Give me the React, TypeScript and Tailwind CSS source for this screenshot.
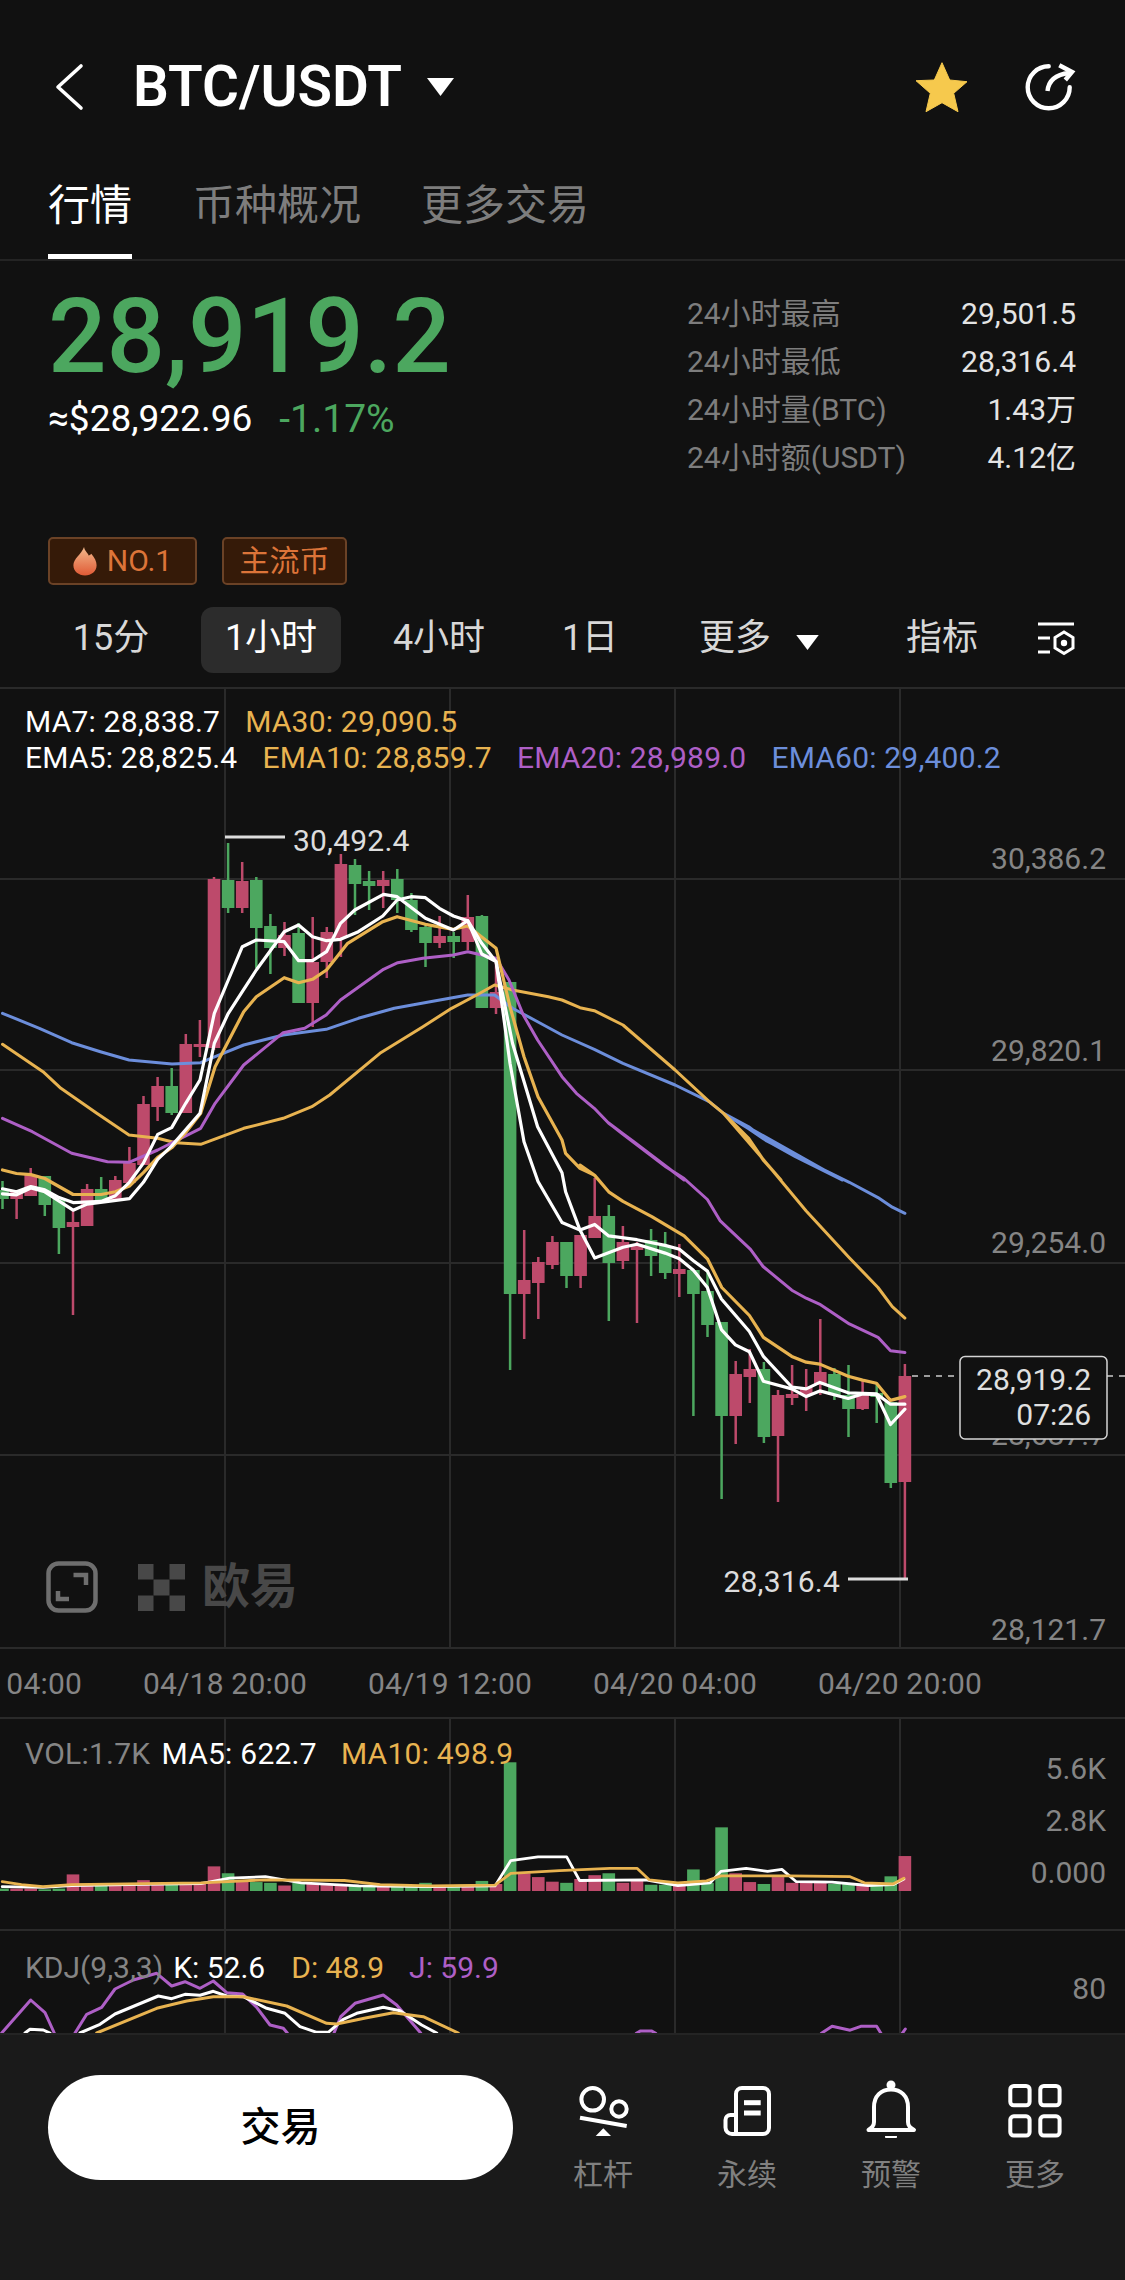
import React from "react";

type P = [number, number];
const Z2 = (p: P[]): P[] => p.map(([x, y]) => [x / 2.79, 680 + y / 3]);
const Z3 = (p: P[]): P[] => p.map(([x, y]) => [x / 2.79, 1100 + y / 2.613]);
const Z4 = (p: P[]): P[] => p.map(([x, y]) => [562 + x / 2.785, 1100 + y / 2.613]);
const Z5 = (p: P[]): P[] => p.map(([x, y]) => [562 + x / 2.785, 680 + y / 3]);
const Z6 = (p: P[]): P[] => p.map(([x, y]) => [x / 1.394, 1680 + y / 2.613]);
const Z12 = (p: P[]): P[] => p.map(([x, y]) => [x / 3, 1920 + y / 3]);
const str = (p: P[]) => p.map(([x, y]) => `${x.toFixed(1)},${y.toFixed(1)}`).join(" ");

const GREEN = "#4ca75f";
const RED = "#bd4a6b";
const ORANGE = "#e8b350";
const PURPLE = "#ae5fc6";
const BLUE = "#6c8edb";
const GRID = "#2a2a2a";

// bodyTop, bodyBottom, wickTop, wickBottom, colour
const candles: [number, number, number, number, "g" | "r"][] = [
  [1190, 1199, 1181, 1209, "g"], [1190, 1199, 1190, 1219, "r"], [1175, 1196, 1168, 1196, "r"], [1176, 1205, 1176, 1216, "g"],
  [1198, 1228, 1198, 1254, "g"], [1222, 1227, 1210, 1315, "r"], [1189, 1226, 1184, 1226, "r"], [1189, 1200, 1177, 1203, "g"],
  [1180, 1200, 1176, 1200, "r"], [1163, 1183, 1147, 1183, "r"], [1104, 1165, 1096, 1165, "r"], [1086, 1107, 1077, 1121, "r"],
  [1086, 1113, 1068, 1115, "g"], [1044, 1113, 1034, 1113, "r"], [1044, 1047, 1020, 1057, "r"], [879, 1048, 877, 1050, "r"],
  [880, 908, 843, 913, "g"], [881, 908, 862, 913, "r"], [880, 928, 877, 968, "g"], [926, 948, 914, 974, "g"],
  [935, 948, 922, 956, "r"], [933, 1003, 923, 1003, "g"], [962, 1003, 917, 1027, "r"], [932, 962, 927, 978, "r"],
  [864, 938, 854, 957, "r"], [865, 884, 859, 915, "g"], [881, 886, 871, 910, "g"], [880, 886, 871, 908, "r"],
  [879, 900, 869, 913, "g"], [900, 930, 893, 932, "g"], [927, 943, 925, 967, "g"], [936, 943, 916, 948, "r"],
  [936, 942, 932, 958, "g"], [917, 942, 895, 950, "r"], [916, 1008, 915, 1008, "g"], [992, 1008, 963, 1014, "r"],
  [982, 1294, 982, 1370, "g"], [1280, 1294, 1230, 1339, "r"], [1262, 1283, 1257, 1319, "r"], [1242, 1265, 1236, 1269, "r"],
  [1242, 1276, 1242, 1288, "g"], [1235, 1276, 1235, 1288, "r"], [1216, 1238, 1178, 1238, "r"], [1216, 1263, 1205, 1321, "g"],
  [1242, 1261, 1226, 1269, "r"], [1245, 1250, 1242, 1323, "r"], [1240, 1256, 1229, 1276, "g"], [1246, 1273, 1232, 1279, "g"],
  [1269, 1274, 1244, 1297, "r"], [1270, 1294, 1270, 1416, "g"], [1291, 1325, 1270, 1337, "g"], [1322, 1416, 1322, 1499, "g"],
  [1374, 1416, 1361, 1444, "r"], [1369, 1377, 1349, 1403, "r"], [1369, 1437, 1362, 1443, "g"], [1395, 1436, 1390, 1502, "r"],
  [1394, 1398, 1365, 1405, "r"], [1387, 1395, 1369, 1411, "r"], [1372, 1385, 1319, 1395, "r"], [1374, 1395, 1368, 1400, "g"],
  [1395, 1409, 1365, 1437, "g"], [1395, 1409, 1381, 1410, "r"], [1393, 1397, 1383, 1423, "g"], [1402, 1483, 1402, 1488, "g"],
  [1376, 1482, 1364, 1578, "r"],
];
const cx = (i: number) => 2.5 + 14.1 * i;

const blue = [
  ...Z2([[7, 1000], [110, 1045], [200, 1088], [280, 1115], [360, 1140], [480, 1152], [560, 1148], [600, 1130], [680, 1095], [790, 1065], [910, 1048], [1000, 1015], [1100, 985], [1200, 965], [1305, 945], [1380, 945], [1430, 985], [1500, 1025]]),
  ...Z5([[0, 1065], [90, 1108], [170, 1150], [315, 1215], [410, 1265], [450, 1300], [520, 1340], [570, 1382], [650, 1430], [780, 1500]]),
  ...Z4([[450, 35], [520, 75], [570, 107], [680, 160], [800, 215], [880, 255], [920, 280], [955, 296]]),
];
const ma30 = [
  ...Z2([[7, 1093], [120, 1175], [170, 1225], [270, 1300], [360, 1365], [440, 1375], [490, 1388], [560, 1393], [680, 1345], [790, 1315], [870, 1280], [920, 1245], [1060, 1120], [1180, 1040], [1260, 985], [1330, 945], [1380, 915], [1430, 930], [1530, 950]]),
  ...Z5([[0, 960], [50, 983], [90, 992], [170, 1035], [315, 1170], [410, 1265], [450, 1300], [520, 1375], [560, 1440], [610, 1500]]),
  ...Z4([[450, 35], [520, 100], [560, 155], [680, 290], [800, 412], [880, 490], [920, 540], [955, 570]]),
];
const ema20 = [
  ...Z2([[7, 1315], [90, 1355], [200, 1420], [300, 1445], [360, 1447], [440, 1410], [560, 1345], [600, 1270], [680, 1155], [790, 1058], [850, 1045], [910, 1005], [950, 960], [1070, 868], [1110, 848], [1180, 835], [1265, 825], [1305, 815], [1384, 835], [1420, 900], [1460, 1005], [1500, 1080]]),
  ...Z5([[0, 1190], [40, 1240], [90, 1285], [130, 1330], [200, 1385], [340, 1500]]),
  ...Z4([[130, 60], [170, 90], [290, 175], [340, 205], [405, 260], [440, 315], [525, 390], [560, 435], [640, 497], [680, 518], [720, 535], [800, 585], [880, 620], [915, 655], [955, 660]]),
];
const ema10 = [
  ...Z3([[7, 183], [46, 192], [86, 195], [125, 205], [204, 247], [282, 247], [322, 240], [361, 225], [400, 190], [440, 150], [479, 125], [518, 85]]),
  ...Z2([[560, 1300], [600, 1160], [680, 995], [715, 950], [793, 893], [833, 908], [872, 898], [911, 870], [970, 790], [1068, 725], [1108, 710], [1187, 733], [1265, 748], [1305, 738], [1384, 805], [1423, 980], [1462, 1130], [1501, 1250]]),
  ...Z5([[0, 1380], [10, 1420], [50, 1465], [90, 1485]]),
  ...Z4([[50, 170], [91, 197], [130, 240], [170, 265], [250, 305], [340, 355], [405, 415], [445, 490], [522, 563], [561, 620], [640, 670], [680, 685], [718, 690], [797, 722], [837, 732], [876, 740], [915, 785], [955, 775]]),
];
const white1 = [
  ...Z3([[7, 232], [46, 240], [86, 226], [125, 235], [165, 255], [204, 268], [282, 265], [322, 250], [361, 215], [400, 165], [440, 90], [479, 72]]),
  ...Z2([[518, 1270], [558, 1200], [598, 1000], [637, 900], [676, 800], [715, 780], [793, 785], [833, 842], [872, 842], [911, 815], [950, 730], [990, 690], [1070, 643], [1108, 650], [1187, 715], [1265, 750], [1305, 722], [1344, 822], [1384, 845], [1423, 1150], [1462, 1385]]),
  ...Z3([[1501, 213]]),
  ...Z4([[0, 320], [50, 340], [91, 325], [130, 355], [209, 365], [287, 380], [327, 390], [366, 420], [405, 447], [444, 520], [522, 605], [561, 670], [640, 750], [680, 755], [718, 738], [797, 765], [876, 768], [915, 795], [955, 795]]),
];
const white2 = [
  ...Z3([[7, 245], [46, 248], [86, 230], [125, 240], [204, 288], [243, 272], [361, 258], [400, 215], [440, 155], [479, 120]]),
  ...Z2([[558, 1300], [598, 1090], [637, 1000], [676, 935], [715, 870], [793, 755], [833, 735], [872, 770], [911, 782], [950, 778], [1000, 755], [1068, 708], [1108, 660], [1147, 650], [1187, 653], [1226, 685], [1265, 708], [1305, 722], [1344, 790], [1384, 845], [1430, 1090], [1500, 1340]]),
  ...Z4([[0, 190], [10, 240], [50, 340], [91, 413], [170, 385], [209, 377], [287, 400], [327, 415], [366, 445], [405, 490], [444, 600], [483, 640], [522, 658], [561, 735], [640, 755], [680, 775], [718, 760], [797, 780], [837, 768], [876, 770], [915, 848], [955, 808]]),
];

const volTops = [545, 545, 545, 547, 545, 508, 533, 535, 533, 533, 523, 530, 532, 528, 530, 487, 505, 525, 528, 530, 537, 530, 533, 535, 535, 538, 538, 538, 540, 540, 530, 537, 538, 540, 525, 533, 215, 505, 515, 527, 530, 520, 510, 505, 530, 523, 535, 535, 535, 495, 530, 385, 505, 528, 533, 515, 530, 530, 525, 533, 533, 535, 535, 513, 460];
const volWhite = Z6([[3, 540], [60, 542], [100, 537], [200, 534], [280, 532], [320, 518], [370, 514], [420, 530], [500, 538], [600, 540], [690, 538], [712, 472], [750, 462], [790, 462], [808, 524], [900, 522], [945, 537], [990, 530], [1005, 500], [1040, 492], [1070, 500], [1090, 495], [1110, 527], [1160, 528], [1210, 537], [1245, 535], [1260, 520]]);
const volOrange = Z6([[3, 527], [30, 535], [60, 540], [100, 535], [280, 530], [370, 522], [420, 523], [480, 524], [530, 535], [600, 538], [690, 536], [712, 505], [780, 498], [850, 492], [888, 492], [905, 522], [945, 530], [985, 525], [1005, 512], [1100, 512], [1185, 514], [1205, 530], [1245, 533], [1260, 518]]);

const kdjPurple: P[][] = [
  Z12([[5, 339], [92, 240], [135, 278], [163, 339]]),
  Z12([[225, 339], [260, 283], [305, 262], [345, 207], [400, 180], [470, 160], [515, 198], [555, 185], [600, 205], [640, 183], [680, 218], [728, 222], [770, 262], [810, 315], [850, 325], [862, 339]]),
  Z12([[1002, 339], [1022, 290], [1065, 250], [1150, 225], [1190, 255], [1262, 339]]),
  Z6([[887, 923], [893, 917], [908, 917], [914, 923]]),
  Z6([[1145, 923], [1160, 905], [1185, 915], [1200, 905], [1222, 905], [1228, 923]]),
  Z6([[1258, 923], [1262, 912]]),
];
const kdjWhite: P[][] = [
  Z12([[75, 339], [90, 328], [130, 330], [150, 339]]),
  Z12([[240, 339], [300, 313], [345, 282], [475, 228], [515, 236], [555, 223], [600, 226], [640, 214], [680, 228], [730, 230], [800, 265], [855, 280], [900, 320], [950, 337], [985, 337], [1030, 298], [1070, 280], [1150, 262], [1200, 272], [1265, 315], [1310, 339]]),
];
const kdjOrange = Z12([[290, 339], [470, 265], [560, 243], [640, 230], [730, 230], [860, 258], [980, 310], [1010, 312], [1100, 293], [1180, 278], [1270, 290], [1375, 339]]);

const Line = ({ p, c, w = 3 }: { p: P[]; c: string; w?: number }) => (
  <polyline points={str(p)} fill="none" stroke={c} strokeWidth={w} strokeLinejoin="round" strokeLinecap="round" />
);

const VGrid = ({ y1, y2 }: { y1: number; y2: number }) => (
  <>
    {[225, 450, 675, 900].map((x) => (
      <line key={x} x1={x} x2={x} y1={y1} y2={y2} stroke={GRID} strokeWidth={2} />
    ))}
  </>
);

const Axis = ({ y, t }: { y: number; t: string }) => (
  <text x={1106} y={y + 10.5} textAnchor="end" fill="#858585" fontSize={30}>
    {t}
  </text>
);

function MainChart() {
  return (
    <svg className="absolute inset-0 h-full w-full" viewBox="0 689 1125 958">
      <VGrid y1={689} y2={1647} />
      {[879, 1070, 1263, 1455].map((y) => (
        <line key={y} x1={0} x2={1125} y1={y} y2={y} stroke={GRID} strokeWidth={2} />
      ))}
      {candles.map(([t, b, wt, wb, c], i) => (
        <g key={i} fill={c === "g" ? GREEN : RED}>
          <rect x={cx(i) - 1.25} y={wt} width={2.5} height={wb - wt} />
          <rect x={cx(i) - 6.3} y={t} width={12.6} height={b - t} />
        </g>
      ))}
      <Line p={blue} c={BLUE} />
      <Line p={ma30} c={ORANGE} />
      <Line p={ema20} c={PURPLE} />
      <Line p={ema10} c={ORANGE} w={3.2} />
      <Line p={white2} c="#ffffff" w={3.2} />
      <Line p={white1} c="#ffffff" w={3.2} />
      <Axis y={858} t="30,386.2" />
      <Axis y={1050} t="29,820.1" />
      <Axis y={1242} t="29,254.0" />
      <Axis y={1434} t="28,687.7" />
      <Axis y={1629} t="28,121.7" />
      <line x1={225} x2={285} y1={837} y2={837} stroke="#dddddd" strokeWidth={3} />
      <text x={293} y={850.5} fill="#dddddd" fontSize={30} letterSpacing={0.2}>30,492.4</text>
      <line x1={848} x2={908} y1={1579} y2={1579} stroke="#dddddd" strokeWidth={3} />
      <text x={840} y={1591.5} textAnchor="end" fill="#dddddd" fontSize={30} letterSpacing={0.2}>28,316.4</text>
      <line x1={912} x2={960} y1={1376} y2={1376} stroke="#cccccc" strokeWidth={1.5} strokeDasharray="6 6" />
      <line x1={1107} x2={1125} y1={1376} y2={1376} stroke="#cccccc" strokeWidth={1.5} strokeDasharray="6 6" />
      <rect x={960} y={1356.5} width={147} height={82.5} rx={5} fill="#111111" stroke="#d5d5d5" strokeWidth={1.5} />
      <text x={1091} y={1389.5} textAnchor="end" fill="#e0e0e0" fontSize={30}>28,919.2</text>
      <text x={1091} y={1424.5} textAnchor="end" fill="#e0e0e0" fontSize={30}>07:26</text>
    </svg>
  );
}

function VolumeChart() {
  const base = 1891;
  return (
    <svg className="absolute inset-0 h-full w-full" viewBox="0 1719 1125 210">
      <VGrid y1={1719} y2={1929} />
      {volTops.map((t, i) => {
        const y = 1680 + t / 2.613;
        return <rect key={i} x={cx(i) - 6.3} y={y} width={12.6} height={base - y} fill={candles[i][4] === "g" ? GREEN : RED} />;
      })}
      <Line p={volWhite} c="#ffffff" w={2.8} />
      <Line p={volOrange} c={ORANGE} w={2.8} />
      <Axis y={1768} t="5.6K" />
      <Axis y={1820} t="2.8K" />
      <Axis y={1872} t="0.000" />
    </svg>
  );
}

function KdjChart() {
  return (
    <svg className="absolute inset-0 h-full w-full" viewBox="0 1931 1125 102">
      <VGrid y1={1931} y2={2033} />
      {kdjPurple.map((p, i) => <Line key={i} p={p} c={PURPLE} />)}
      {kdjWhite.map((p, i) => <Line key={i} p={p} c="#ffffff" />)}
      <Line p={kdjOrange} c={ORANGE} />
      <Axis y={1988} t="80" />
    </svg>
  );
}

const Caret = ({ className }: { className: string }) => (
  <svg className={className} viewBox="0 0 27 18">
    <polygon points="0,0 27,0 13.5,18" fill="#ffffff" />
  </svg>
);

const Stat = ({ l, v }: { l: string; v: string }) => (
  <div className="flex h-[48px] items-center justify-between">
    <span className="text-[#7d7d7d]">{l}</span>
    <span className="text-[#e4e4e4]">{v}</span>
  </div>
);

const NavItem = ({ label, children }: { label: string; children: React.ReactNode }) => (
  <div className="flex w-[144px] flex-col items-center pt-[3px]">
    <svg className="h-[60px] w-[60px]" viewBox="0 0 60 60" fill="none" stroke="#ffffff">
      {children}
    </svg>
    <span className="mt-[17px] text-[30px] leading-[40px] text-[#808080]">{label}</span>
  </div>
);

export default function App() {
  return (
    <div className="flex h-[2280px] w-[1125px] flex-col overflow-hidden bg-[#111111] text-white [font-family:Roboto,'Noto_Sans_CJK_SC',sans-serif]">
      {/* header */}
      <div className="mt-[40px] flex h-[94px] items-center">
        <svg className="ml-[54px] h-[48px] w-[30px]" viewBox="0 0 30 48" fill="none" stroke="#ffffff" strokeWidth={3.6} strokeLinecap="round" strokeLinejoin="round">
          <polyline points="27,3 4,24 27,45" />
        </svg>
        <span className="ml-[49px] text-[56.5px] font-semibold leading-none">BTC/USDT</span>
        <Caret className="ml-[25px] h-[18px] w-[27px]" />
        <svg className="ml-[453px] h-[65px] w-[70px]" viewBox="0 0 70 65">
          <polygon points="35,7.7 42.7,25 60,26.7 46.7,38.3 51,56.7 35,47.7 19,56.7 23.3,38.3 9,25.7 27.3,25" fill="#f6c94d" stroke="#f6c94d" strokeWidth={1} strokeLinejoin="round" />
        </svg>
        <svg className="ml-[45px] h-[54px] w-[54px]" viewBox="0 0 54 54" fill="none" stroke="#ffffff" strokeWidth={4.4}>
          <path d="M26.7 6.3A21 21 0 1 0 47.7 27.3" strokeLinecap="round" />
          <path d="M25.5 31C26.5 21 34 14.5 47 13" />
          <polyline points="37.3,5.3 50,12 43.3,20" />
        </svg>
      </div>

      {/* tabs */}
      <div className="flex h-[127px] items-start border-b-2 border-[#242424] pl-[48px] pt-[46px] text-[42px] leading-[52px] text-[#7d7d7d]">
        <div className="h-[79px] w-[84px] border-b-[5px] border-white text-center text-white">行情</div>
        <span className="ml-[61px]">币种概况</span>
        <span className="ml-[60px]">更多交易</span>
      </div>

      {/* price */}
      <div className="flex h-[248px] pl-[48px]">
        <div className="w-[639px]">
          <div className="mt-[16px] text-[103px] font-medium leading-[120px] text-[#4ca75f]">28,919.2</div>
          <div className="flex items-center text-[37px] leading-[44px]">
            <span>≈$28,922.96</span>
            <span className="ml-[27px] text-[39px] text-[#4ca75f]">-1.17%</span>
          </div>
        </div>
        <div className="mt-[29px] w-[389px] text-[30px] leading-[40px]">
          <Stat l="24小时最高" v="29,501.5" />
          <Stat l="24小时最低" v="28,316.4" />
          <Stat l="24小时量(BTC)" v="1.43万" />
          <Stat l="24小时额(USDT)" v="4.12亿" />
        </div>
      </div>

      {/* tags */}
      <div className="mt-[28px] flex h-[48px] gap-[25px] pl-[48px] text-[30px] leading-none text-[#dc7439]">
        <div className="flex w-[149px] items-center justify-center gap-[10px] rounded-[5px] border-2 border-[#6b4226] bg-[#351a08]">
          <svg className="h-[29px] w-[24px]" viewBox="0 0 24 30">
            <defs>
              <linearGradient id="flame" x1="0" y1="0" x2="0" y2="1">
                <stop offset="0" stopColor="#f2b98c" />
                <stop offset="1" stopColor="#e05a35" />
              </linearGradient>
            </defs>
            <path d="M11 0C12 5 15 6 16 9C17 8 18 8 18.5 7C22 11 24 15 24 19C24 25.5 18.5 29.5 12 29.5C5.5 29.5 0 25.5 0 19C0 12 8 8 11 0Z" fill="url(#flame)" />
          </svg>
          <span>NO.1</span>
        </div>
        <div className="flex w-[125px] items-center justify-center rounded-[5px] border-2 border-[#6b4226] bg-[#351a08]">主流币</div>
      </div>

      {/* timeframes */}
      <div className="mt-[22px] flex h-[66px] items-center whitespace-nowrap text-[36px] leading-none text-[#d8d8d8]">
        <div className="ml-[41px] w-[140px] pb-[5px] text-center">15分</div>
        <div className="ml-[20px] flex h-[66px] w-[140px] items-center justify-center rounded-[12px] bg-[#2c2c2c] pb-[5px] text-white">1小时</div>
        <div className="ml-[28px] w-[140px] pb-[5px] text-center">4小时</div>
        <div className="ml-[31px] w-[100px] pb-[5px] text-center">1日</div>
        <div className="ml-[59px] w-[72px] pb-[5px] text-center">更多</div>
        <Caret className="ml-[25px] mt-[4px] h-[15px] w-[23px]" />
        <div className="ml-[87px] w-[72px] pb-[5px] text-center">指标</div>
        <svg className="ml-[59px] mt-[2px] h-[40px] w-[38px]" viewBox="0 0 38 40" fill="none" stroke="#ffffff" strokeWidth={3}>
          <line x1="1" x2="37" y1="3" y2="3" />
          <line x1="1" x2="13" y1="17" y2="17" />
          <line x1="1" x2="13" y1="31" y2="31" />
          <polygon points="27,11 36,16.5 36,27 27,32.5 18,27 18,16.5" />
          <circle cx="27" cy="22" r="3.2" fill="#ffffff" stroke="none" />
        </svg>
      </div>

      {/* main chart */}
      <div className="relative mt-[14px] h-[960px] border-t-2 border-[#2a2a2a]">
        <MainChart />
        <div className="absolute left-[25px] top-[15px] text-[30px] leading-[36px] tracking-[0.2px]">
          <div className="flex gap-[25px]">
            <span className="text-white">MA7: 28,838.7</span>
            <span className="text-[#e8b350]">MA30: 29,090.5</span>
          </div>
          <div className="flex gap-[25px]">
            <span className="text-white">EMA5: 28,825.4</span>
            <span className="text-[#e8b350]">EMA10: 28,859.7</span>
            <span className="text-[#ae5fc6]">EMA20: 28,989.0</span>
            <span className="text-[#6c8edb]">EMA60: 29,400.2</span>
          </div>
        </div>
        <div className="absolute left-[46px] top-[872px] flex items-center">
          <svg className="h-[52px] w-[52px]" viewBox="0 0 52 52" fill="none" stroke="#6e6e6e" strokeWidth={4.5}>
            <rect x="2.5" y="2.5" width="47" height="47" rx="10" />
            <polyline points="27.5,14 40,14 40,24" />
            <polyline points="12,30 12,38 23,38" />
          </svg>
          <svg className="ml-[40px] h-[47px] w-[47px]" viewBox="0 0 47 47" fill="#484848">
            <rect x="0" y="0" width="15.5" height="15.5" />
            <rect x="31.5" y="0" width="15.5" height="15.5" />
            <rect x="15.5" y="15.5" width="16" height="16" />
            <rect x="0" y="31.5" width="15.5" height="15.5" />
            <rect x="31.5" y="31.5" width="15.5" height="15.5" />
          </svg>
          <span className="ml-[17px] text-[48px] font-bold leading-none text-[#484848]">欧易</span>
        </div>
      </div>

      {/* time axis */}
      <div className="h-[70px] overflow-hidden border-t-2 border-[#2a2a2a]">
        <div className="-ml-[112.5px] flex pt-[17px] text-[30px] leading-[36px] tracking-[0.2px] text-[#858585]">
          {["04/18 04:00", "04/18 20:00", "04/19 12:00", "04/20 04:00", "04/20 20:00"].map((t) => (
            <div key={t} className="w-[225px] shrink-0 text-center">{t}</div>
          ))}
        </div>
      </div>

      {/* volume */}
      <div className="relative h-[212px] border-t-2 border-[#2a2a2a]">
        <VolumeChart />
        <div className="absolute left-[25px] top-[17px] flex text-[30px] leading-[36px] tracking-[0.25px]">
          <span className="text-[#858585]">VOL:1.7K</span>
          <span className="ml-[11px] text-white">MA5: 622.7</span>
          <span className="ml-[24px] text-[#e8b350]">MA10: 498.9</span>
        </div>
      </div>

      {/* kdj */}
      <div className="relative h-[104px] overflow-hidden border-t-2 border-[#2a2a2a]">
        <KdjChart />
        <div className="absolute left-[25px] top-[19px] flex text-[30px] leading-[36px]">
          <span className="text-[#858585]">KDJ(9,3,3)</span>
          <span className="ml-[10px] text-white">K: 52.6</span>
          <span className="ml-[26px] text-[#e8b350]">D: 48.9</span>
          <span className="ml-[25px] text-[#ae5fc6]">J: 59.9</span>
        </div>
      </div>

      {/* bottom bar */}
      <div className="flex flex-1 items-start border-t-2 border-[#242424] bg-[#1a1a1a] pl-[48px] pt-[40px]">
        <div className="flex h-[105px] w-[465px] items-center justify-center rounded-full bg-white text-[40px] font-medium text-black">交易</div>
        <div className="ml-[18px] flex">
          <NavItem label="杠杆">
            <circle cx="19.7" cy="21.3" r="11.3" strokeWidth={4} />
            <circle cx="46" cy="31" r="7.7" strokeWidth={4} />
            <line x1="7" y1="39.7" x2="53.7" y2="48" strokeWidth={4} />
            <polygon points="22.7,58 38,58 30.3,50.3" fill="#ffffff" stroke="none" />
          </NavItem>
          <NavItem label="永续">
            <g strokeWidth={4} strokeLinejoin="round">
              <path d="M19 56V16a6 6 0 0 1 6-6H46a6 6 0 0 1 6 6V50a6 6 0 0 1-6 6H15a6.500 6.500 0 0 1-6.500-6.500V42a5 5 0 0 1 5-5H19" />
              <line x1="27" x2="43.700" y1="24.700" y2="24.700" strokeWidth={5} />
              <line x1="27" x2="43.700" y1="35" y2="35" strokeWidth={5} />
            </g>
          </NavItem>
          <NavItem label="预警">
            <path d="M7.500 52C11 49.500 13 48 13 44V29C13 18 20 11.500 30 11.500C40 11.500 47 18 47 29V44C47 48 49 49.500 53 52Z" strokeWidth={4} strokeLinejoin="round" />
            <circle cx="30" cy="7" r="4.500" fill="#ffffff" stroke="none" />
            <path d="M24 58H36A6 6 0 0 1 24 58Z" fill="#ffffff" stroke="none" />
          </NavItem>
          <NavItem label="更多">
            <g strokeWidth={4}>
              <rect x="5.300" y="8" width="19.300" height="19.300" rx="3.500" />
              <rect x="35.300" y="8" width="19.300" height="19.300" rx="3.500" />
              <rect x="5.300" y="38.300" width="19.300" height="19.300" rx="3.500" />
              <rect x="35.300" y="38.300" width="19.300" height="19.300" rx="3.500" />
            </g>
          </NavItem>
        </div>
      </div>
    </div>
  );
}
